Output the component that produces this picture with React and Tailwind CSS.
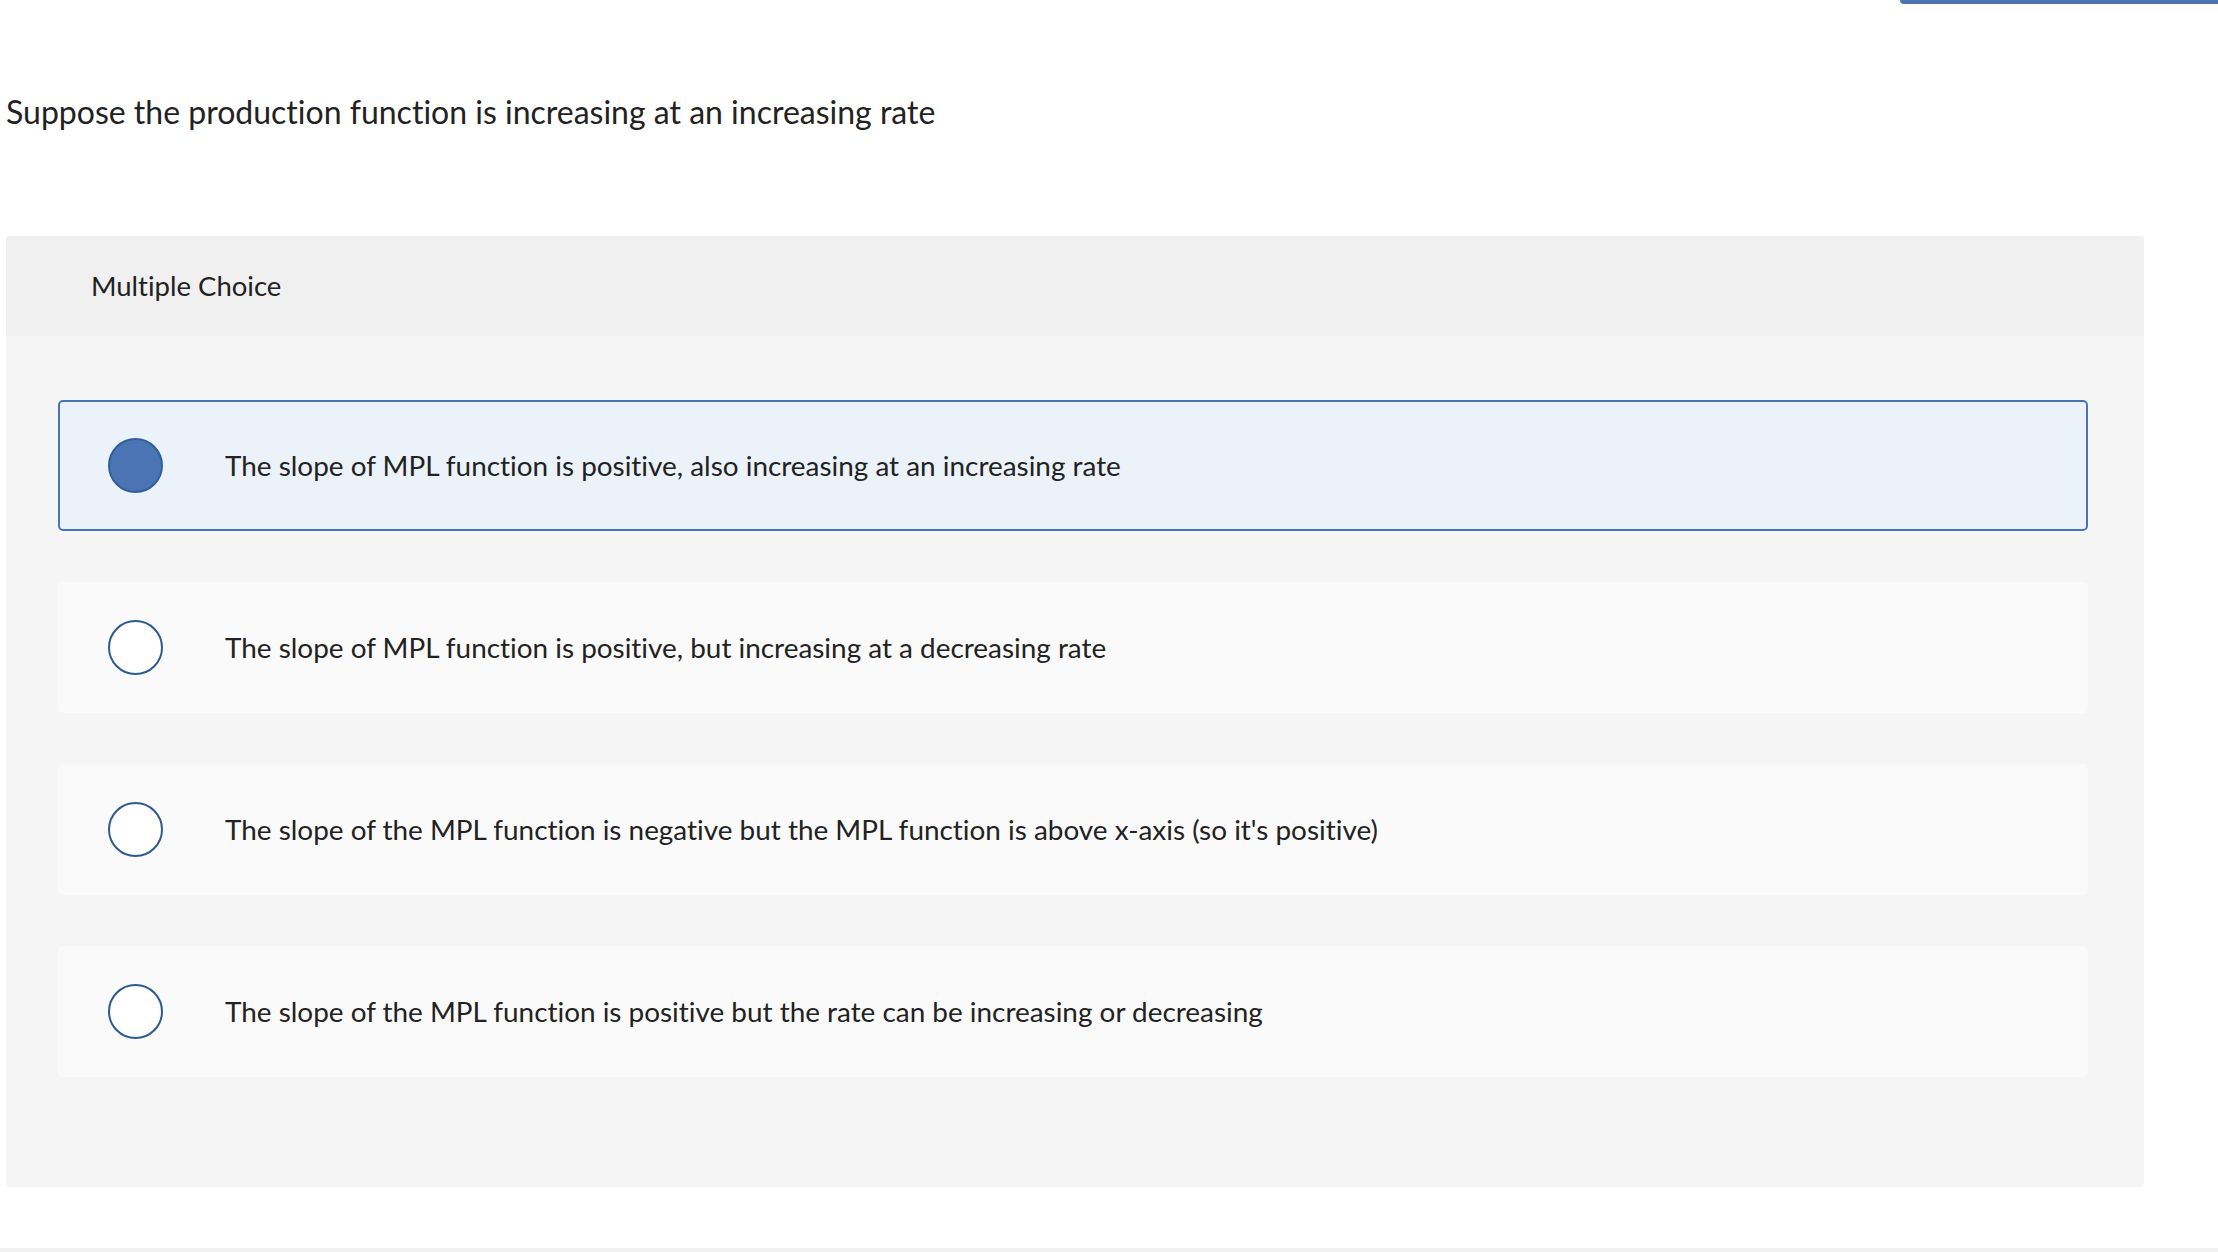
import React from "react";

const options = [
  { id: 1, text: "The slope of MPL function is positive, also increasing at an increasing rate", selected: true },
  { id: 2, text: "The slope of MPL function is positive, but increasing at a decreasing rate" },
  { id: 3, text: "The slope of the MPL function is negative but the MPL function is above x-axis (so it's positive)" },
  { id: 4, text: "The slope of the MPL function is positive but the rate can be increasing or decreasing" },
];

const font = { fontFamily: "Lato, 'Open Sans', sans-serif" };

const Option = ({ text, selected }) => (
  <div
    className={
      selected
        ? "flex h-[131px] items-center rounded-[5px] border-2 border-[#4a74b4] bg-[#ebf2fa] pl-[48px]"
        : "flex h-[131px] items-center rounded-[5px] border-2 border-transparent bg-[#fafafa] pl-[48px]"
    }
  >
    <span
      className={
        selected
          ? "h-[55px] w-[55px] shrink-0 rounded-full border-2 border-[#335e97] bg-[#4a74b4]"
          : "h-[55px] w-[55px] shrink-0 rounded-full border-2 border-[#2f5a8f] bg-white"
      }
    />
    <span className="ml-[62px] text-[27.9px] text-[#222]">{text}</span>
  </div>
);

export default function App() {
  return (
    <div className="min-h-[1252px] bg-white [font-variant-ligatures:none]" style={font}>
      <div className="flex justify-end">
        <div className="h-[4px] w-[318px] rounded-bl-[4px] bg-[#4a74b4]" />
      </div>
      <h1 className="mt-[90px] pl-[6px] text-[32px] leading-[36px] text-[#222]">
        Suppose the production function is increasing at an increasing rate
      </h1>
      <div className="ml-[6px] mt-[106px] w-[2138px] overflow-hidden rounded-[4px] bg-[#f5f5f5]">
        <div className="flex h-[100px] items-center bg-[#f0f0f0] pl-[85px] text-[27.5px] text-[#222]">
          Multiple Choice
        </div>
        <div className="flex flex-col gap-[51px] pb-[110px] pl-[52px] pr-[56px] pt-[64px]">
          {options.map((o) => (
            <Option key={o.id} text={o.text} selected={o.selected} />
          ))}
        </div>
      </div>
      <div className="mt-[61px] h-[4px] bg-[#f0f0f0]" />
    </div>
  );
}
